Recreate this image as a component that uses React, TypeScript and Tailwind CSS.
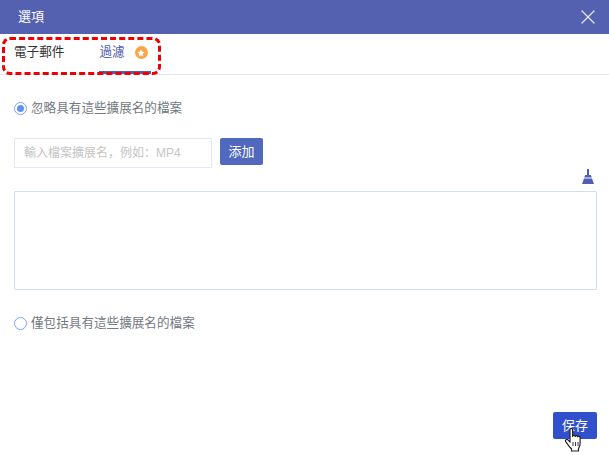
import { X } from "lucide-react";

const font = { fontFamily: '"Liberation Sans", "Noto Sans CJK SC", sans-serif' };

function Radio({ checked, label }: { checked?: boolean; label: string }) {
  return (
    <label className="flex items-center text-[12.6px] leading-[18px] text-[#73797f]">
      <span className="flex h-[13px] w-[13px] items-center justify-center rounded-full border-[1.5px] border-[#7ba4f5] bg-white">
        {checked && <span className="h-[7px] w-[7px] rounded-full bg-[#5f92f2]" />}
      </span>
      <span className="ml-[4px]">{label}</span>
    </label>
  );
}

export default function App() {
  return (
    <div className="flex h-[455px] w-[609px] flex-col overflow-hidden bg-white" style={font}>
      <header className="flex h-[34px] items-center justify-between bg-[#5460b0] pl-[18px] pr-[9px] text-[13px] text-white">
        <span>選項</span>
        <X className="h-[24px] w-[24px] text-[#e6e8f6]" strokeWidth={1.25} />
      </header>

      <div className="relative flex h-[41px] border-b border-[#e4e7ed] text-[12.6px]">
        <div className="ml-[14px] pt-[9px] leading-[18px] text-[#333333]">電子郵件</div>
        <div className="relative ml-[35px] flex h-[40px] items-start border-b-[3px] border-[#5460b0] pt-[9px] pr-[3px]">
          <span className="leading-[18px] text-[#5460b0]">過濾</span>
          <span className="ml-[10px] mt-[3px] flex h-[13px] w-[13px] items-center justify-center rounded-full bg-[#f9a54a]">
            <svg viewBox="0 0 10 10" className="h-[8px] w-[8px]" fill="#fff">
              <path d="M5 .6l1.400 2.900 3.100.4-2.300 2.200.6 3.200L5 7.800 2.200 9.300l.6-3.200L.5 3.900l3.100-.4z" />
            </svg>
          </span>
        </div>
        <div className="absolute left-[2px] top-[3px] h-[38px] w-[159px] rounded-[8px] border-[3px] border-dashed border-[#ee0000]" />
      </div>

      <div className="flex flex-1 flex-col pl-[14px] pr-[12px]">
        <div className="mt-[24px]">
          <Radio checked label="忽略具有這些擴展名的檔案" />
        </div>

        <div className="mt-[21px] flex items-start">
          <div className="flex h-[30px] w-[198px] items-center border border-[#e0e8f5] pl-[9px] text-[12px] text-[#c4c4c4]">
            輸入檔案擴展名，例如：MP4
          </div>
          <button className="ml-[8px] h-[27px] w-[43px] rounded-[2px] bg-[#5068bd] text-[13px] text-white">添加</button>
        </div>

        <div className="mt-[1px] flex justify-end">
          <svg viewBox="0 0 14 16" className="mr-[2px] h-[16px] w-[14px]" fill="#4f5fb5">
            <path d="M6 0h2v6H6z" />
            <path d="M4.200 6h5.600l1 2.600H3.200z" />
            <path d="M3 9.400h8L13 15H1z" />
          </svg>
        </div>

        <div className="mt-[6px] h-[99px] w-full rounded-[1px] border border-[#cfdff0]" />

        <div className="mt-[24px]">
          <Radio label="僅包括具有這些擴展名的檔案" />
        </div>

        <div className="mt-auto mb-[16px] flex justify-end">
          <div className="relative">
            <button className="h-[27px] w-[44px] rounded-[2px] bg-[#3050cc] text-[13px] text-white">保存</button>
            <svg viewBox="0 0 20 26" className="absolute left-[11px] top-[15px] h-[26px] w-[20px]" fill="#fff" stroke="#222" strokeWidth="1.2" strokeLinejoin="round">
              <path d="M6 2.500c0-1.600 2.600-1.600 2.600 0v7c.3-1.500 2.500-1.400 2.600 0 .3-1.200 2.400-1.100 2.500.3.4-1 2.300-.8 2.400.6v6c0 2.300-.9 3.600-1.600 5.100v2.500H7.500v-2.200C6 20.500 3 16.500 1.700 14.600c-1-1.600 1.100-3 2.300-1.700L6 15z" />
              <path d="M9 15v4M11.500 15v4M14 15v4" fill="none" strokeWidth="0.9" />
            </svg>
          </div>
        </div>
      </div>
    </div>
  );
}
